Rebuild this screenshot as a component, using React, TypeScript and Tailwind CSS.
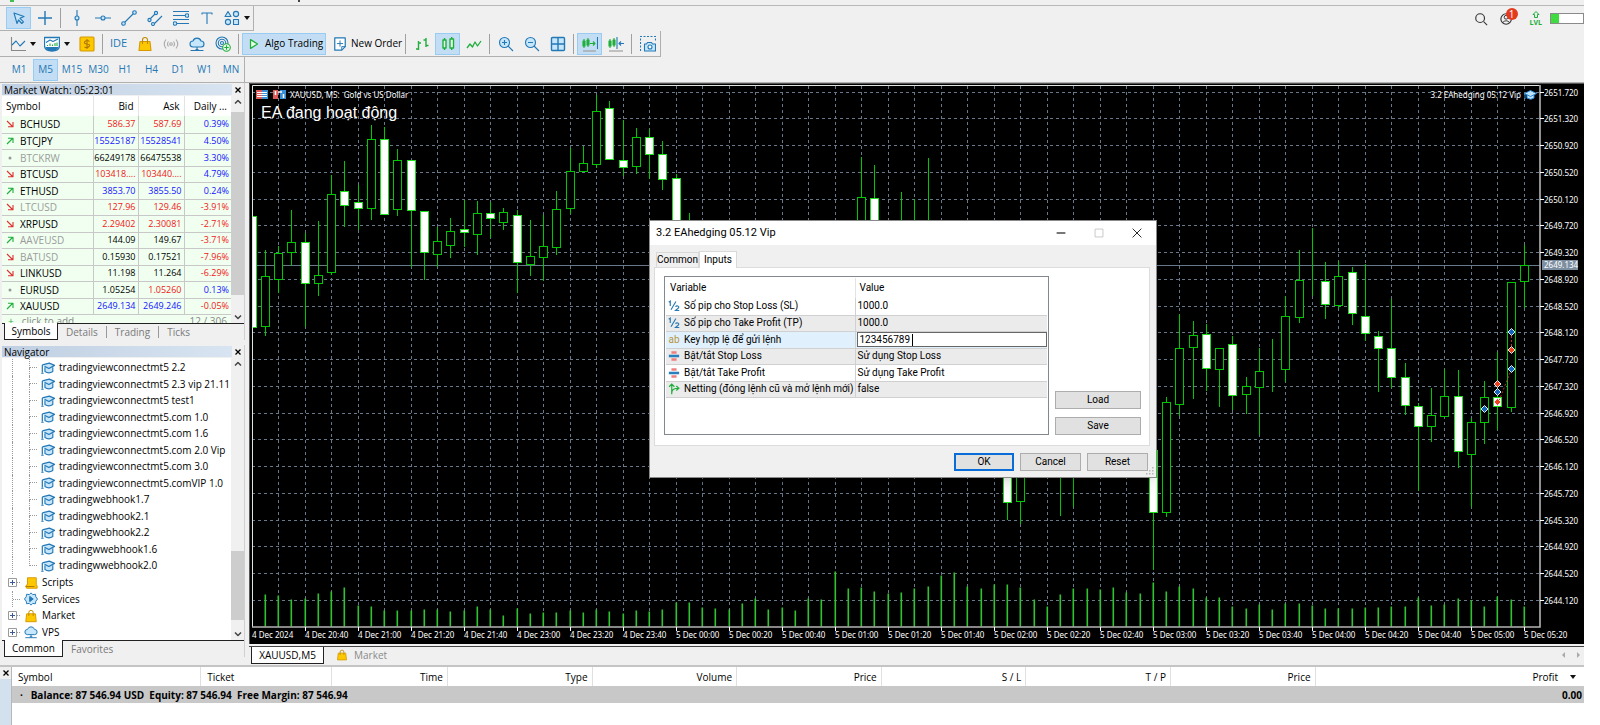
import type { ReactNode } from "react";

/* ---------- chart data ---------- */

type Candle = [slot: number, high: number, top: number, bottom: number, low: number, filled: 0 | 1];

const candles: Candle[] = [
  [0, 216, 216, 327, 327, 1], [1, 250, 276, 326, 335, 0], [2, 246, 253, 279, 292, 0], [3, 210, 242, 252, 265, 0],
  [4, 233, 242, 283, 326, 1], [5, 221, 275, 283, 295, 0], [6, 175, 194, 272, 274, 0], [7, 161, 191, 205, 226, 1],
  [8, 185, 202, 208, 229, 1], [9, 125, 139, 208, 219, 0], [10, 127, 139, 214, 214, 1], [11, 149, 160, 209, 215, 0],
  [12, 160, 160, 210, 266, 1], [13, 211, 211, 252, 279, 1], [14, 227, 241, 254, 266, 0], [15, 218, 231, 245, 257, 0],
  [16, 200, 229, 232, 246, 1], [17, 201, 213, 234, 254, 0], [18, 202, 213, 218, 237, 1], [19, 208, 212, 222, 229, 0],
  [20, 210, 215, 262, 292, 1], [21, 220, 256, 264, 275, 0], [22, 215, 246, 257, 280, 0], [23, 191, 209, 247, 254, 0],
  [24, 148, 171, 208, 213, 0], [25, 146, 163, 171, 171, 0], [26, 95, 111, 164, 167, 0], [27, 101, 108, 159, 159, 1],
  [28, 120, 160, 167, 175, 1], [29, 128, 137, 166, 173, 0], [30, 129, 137, 154, 178, 1], [31, 141, 154, 179, 189, 1],
  [32, 174, 178, 245, 260, 1], [33, 213, 240, 260, 270, 0], [46, 157, 197, 240, 250, 0], [47, 165, 198, 240, 250, 1],
  [49, 192, 240, 260, 270, 0], [50, 199, 240, 260, 270, 0], [51, 158, 240, 260, 270, 0], [57, 440, 450, 502, 519, 1],
  [58, 440, 450, 501, 523, 0], [61, 430, 440, 460, 515, 0], [62, 430, 440, 460, 506, 0], [68, 440, 450, 512, 569, 1],
  [69, 397, 402, 512, 516, 0], [70, 314, 348, 404, 415, 0], [71, 321, 335, 347, 398, 0], [72, 324, 334, 368, 390, 1],
  [73, 348, 348, 369, 406, 0], [74, 336, 344, 395, 409, 1], [75, 377, 386, 394, 413, 0], [76, 348, 371, 387, 434, 0],
  [77, 339, 370, 370, 391, 0], [78, 296, 316, 369, 381, 0], [79, 250, 280, 317, 322, 0], [80, 228, 281, 281, 295, 0],
  [81, 262, 281, 304, 318, 1], [82, 261, 276, 305, 308, 0], [83, 267, 272, 313, 324, 1], [84, 264, 316, 333, 340, 1],
  [85, 331, 336, 348, 391, 1], [86, 299, 348, 377, 387, 1], [87, 363, 377, 405, 414, 1], [88, 403, 406, 426, 490, 1],
  [89, 388, 415, 426, 441, 0], [90, 369, 396, 416, 416, 0], [91, 370, 396, 451, 467, 1], [92, 418, 422, 454, 506, 0],
  [93, 381, 397, 422, 443, 0], [94, 352, 397, 406, 429, 1], [95, 282, 282, 407, 411, 0], [96, 245, 265, 281, 307, 0],
];

const volumes = [
  32, 31, 27, 28, 33, 35, 39, 21, 20, 16, 16, 16, 17, 17, 15, 16, 20, 17, 11, 18, 13, 14, 14, 16, 14, 17, 15, 13, 16,
  15, 17, 24, 24, 19, 18, 17, 23, 28, 17, 19, 16, 28, 27, 55, 38, 39, 35, 33, 34, 38, 40, 51, 54, 40, 38, 42, 42, 39,
  27, 20, 32, 38, 38, 37, 39, 34, 33, 44, 35, 40, 38, 29, 29, 20, 18, 22, 17, 23, 23, 21, 18, 18, 18, 19, 19, 20, 20,
  29, 21, 22, 28, 26, 20, 30, 27, 20,
];

const timeLabels = [
  "4 Dec 20:40", "4 Dec 21:00", "4 Dec 21:20", "4 Dec 21:40", "4 Dec 23:00", "4 Dec 23:20", "4 Dec 23:40",
  "5 Dec 00:00", "5 Dec 00:20", "5 Dec 00:40", "5 Dec 01:00", "5 Dec 01:20", "5 Dec 01:40", "5 Dec 02:00",
  "5 Dec 02:20", "5 Dec 02:40", "5 Dec 03:00", "5 Dec 03:20", "5 Dec 03:40", "5 Dec 04:00", "5 Dec 04:20",
  "5 Dec 04:40", "5 Dec 05:00", "5 Dec 05:20",
];

const slotX = (slot: number) => Math.round(251.6 + slot * 13.253) + 0.5;
const rowY = (row: number) => Math.round(91.5 + row * 26.76) + 0.5;

const trades: [number, number, string][] = [
  [95, 332, "#1565c0"], [95, 350, "#f04020"], [95, 369, "#1565c0"], [94, 384, "#f04020"],
  [94, 392, "#1565c0"], [94, 402, "#f04020"], [93, 409, "#1565c0"],
];

function Chart() {
  return (
    <svg viewBox="249 83 1335 561" className="block w-full bg-black" role="img" aria-label="XAUUSD M5 chart">
      <g stroke="#66788a" strokeDasharray="3 3" fill="none">
        {Array.from({ length: 48 }, (_, k) => (
          <path key={k} d={`M${slotX(2 + 2 * k)} 86V627`} />
        ))}
        {Array.from({ length: 20 }, (_, k) => (
          <path key={k} d={`M252 ${rowY(k)}H1540`} />
        ))}
      </g>
      <path d="M253 265.5H1540" stroke="#66788a" />
      <g fill="#2fc42f">
        {volumes.map((v, i) => (
          <rect key={i} x={slotX(i + 1) - 1} y={626.5 - v} width={1.6} height={v} />
        ))}
      </g>
      <g stroke="#00c800">
        {candles.map(([slot, high, top, bottom, low, filled]) => {
          const x = slotX(slot);
          const left = slot === 0 ? x : x - 4;
          return (
            <g key={slot}>
              <path d={`M${x} ${high}V${low + 1}`} />
              <rect
                x={left}
                y={top + 0.5}
                width={x + 4 - left}
                height={bottom - top}
                fill={filled ? "#fff" : "#000"}
                stroke={filled ? "#1be01b" : "#00c800"}
              />
            </g>
          );
        })}
      </g>
      <path d="M1511.5 332V350M1511.5 369L1498.5 402" stroke="#b03a20" strokeDasharray="2 2" fill="none" />
      {trades.map(([slot, y, color]) => (
        <path
          key={`${slot}-${y}`}
          d={`M${slotX(slot)} ${y - 3.5}l3.5 3.5l-3.5 3.5l-3.5 -3.5z`}
          fill={color}
          stroke="#e8eef5"
        />
      ))}
      <path d="M252.5 627V85.500H1539.500" stroke="#dfe6df" fill="none" />
      <path d="M252 627H1540V85" stroke="#b4b4b4" strokeWidth={1.6} fill="none" />
      <path d="M249.500 644V83.500H1584" stroke="#555" fill="none" />
      <g className="fill-white font-['Noto_Sans',sans-serif] text-[8px]">
        {Array.from({ length: 20 }, (_, k) => (
          <g key={k}>
            <path d={`M1540 ${rowY(k)}h4`} stroke="#fff" />
            <text x={1544} y={rowY(k) + 3}>{(2651.72 - 0.4 * k).toFixed(3)}</text>
          </g>
        ))}
        <rect x={1542} y={260} width={36} height={10} fill="#7c8ea0" />
        <text x={1544} y={268}>2649.134</text>
        <text x={252} y={638}>4 Dec 2024</text>
        {timeLabels.map((t, k) => (
          <g key={t}>
            <path d={`M${slotX(4 + 4 * k)} 627v4`} stroke="#fff" />
            <text x={slotX(4 + 4 * k) - 0.5} y={638}>{t}</text>
          </g>
        ))}
        <text x={290} y={98}>XAUUSD, M5:&nbsp; Gold vs US Dollar</text>
        <text x={1521} y={98} textAnchor="end">3.2 EAhedging 05.12 Vip</text>
      </g>
      <text x={261} y={118} className="fill-white font-['Liberation_Sans',Arial,sans-serif] text-[16px]">
        EA đang hoạt động
      </text>
      <g>
        <path d="M256 90h6v9h-6z" fill="#e05a5a" />
        <path d="M262 90h6v9h-6z" fill="#3b8fd6" />
        <path d="M257 92.500h10M257 94.500h10M257 96.500h10" stroke="#fff" />
        <path d="M273 90h5v9h-5z" fill="#e05a5a" />
        <path d="M280 90h6v9h-6z" fill="#3b8fd6" />
        <path d="M275.500 91v4M278 92h4M283.500 94v4" stroke="#fff" strokeWidth={1.500} />
      </g>
      <path d="M1527 95v3q4 2.500 7 0v-3" fill="#bfe3fb" stroke="#2a8ad4" />
      <path d="M1524.500 93.500l6-3 6 3-6 3zM1525 94v5" fill="#bfe3fb" stroke="#2a8ad4" />
    </svg>
  );
}

/* ---------- icons ---------- */

function Icon({ children, size = "size-4" }: { children: ReactNode; size?: string }) {
  return (
    <svg
      viewBox="0 0 16 16"
      className={`${size} shrink-0`}
      fill="none"
      stroke="#2378b5"
      strokeWidth={1.1}
      strokeLinejoin="round"
      aria-hidden="true"
    >
      {children}
    </svg>
  );
}

const BagIcon = ({ size }: { size?: string }) => (
  <Icon size={size}>
    <path d="M3 5.500h10l1 9H2z" fill="#fdc800" stroke="#d69a00" />
    <path d="M5.500 8V4a2.500 2.500 0 0 1 5 0v4" stroke="#c08a00" />
  </Icon>
);

const CloudIcon = ({ size }: { size?: string }) => (
  <Icon size={size}>
    <path d="M4 11a3 3 0 0 1 0-6 4.200 4.200 0 0 1 8 0 3 3 0 0 1 0 6z" fill="#c5e6fb" />
    <path d="M8 11v3M1.500 14.500h13M6.500 13.500h3" />
  </Icon>
);

const CapIcon = () => (
  <Icon size="size-3.5">
    <path d="M4.500 7v5q4.500 3 9 0V7" fill="#c5e6fb" strokeWidth={1.300} />
    <path d="M1.500 4.500L9.500 2.500l6 2.500-6.500 3.500-5-2.500M1.500 4.500V13M.3 14h2.700" fill="#c5e6fb" strokeWidth={1.400} />
  </Icon>
);

const PlusBox = () => (
  <svg viewBox="0 0 9 9" className="size-[9px] bg-white" aria-hidden="true">
    <path d="M.5 .5h8v8h-8z" fill="#fff" stroke="#9a9a9a" />
    <path d="M2 4.500h5M4.500 2v5" stroke="#3b5a9a" />
  </svg>
);

const Close = ({ label }: { label: string }) => (
  <button aria-label={label} className="flex size-3 items-center justify-center">
    <svg viewBox="0 0 6 6" className="size-1.5" aria-hidden="true">
      <path d="M.5 .5l5 5M5.500 .5l-5 5" stroke="#000" strokeWidth={1.300} />
    </svg>
  </button>
);

const Caret = () => (
  <svg viewBox="0 0 6 4" className="h-1 w-1.5 shrink-0" aria-hidden="true">
    <path d="M0 0h6L3 4z" fill="#111" />
  </svg>
);

/* ---------- toolbars ---------- */

function Tool({ label, active, children, menu }: { label: string; active?: boolean; children: ReactNode; menu?: boolean }) {
  return (
    <button
      aria-label={label}
      className={`flex h-[22px] shrink-0 items-center justify-center gap-1 border ${menu ? "w-[33px]" : "w-[25px]"} ${
        active ? "border-[#99ccf3] bg-[#c3def4]" : "border-transparent"
      }`}
    >
      {children}
      {menu && <Caret />}
    </button>
  );
}

const Sep = () => <span className="mx-0.5 h-5 w-px shrink-0 bg-[#a0a0a0]" />;

function Bar({ children }: { children: ReactNode }) {
  return (
    <div className="flex h-[25px] w-max items-center gap-px border-r border-b border-[#b0b0b0] pl-1.5 even:h-[26px] last:border-b-0">
      {children}
    </div>
  );
}

function DrawingBar() {
  return (
    <Bar>
      <Tool label="Cursor" active>
        <Icon><path d="M2.500 2.500l10 3.500-4 1.800 3.500 3.500-1.700 1.700L7 9.500 5.500 13z" fill="#c5e6fb" transform="translate(.5 .5)" /></Icon>
      </Tool>
      <Tool label="Crosshair"><Icon><path d="M8 1v5M8 10v5M1 8h5M10 8h5M8 6v4M6 8h4" strokeWidth={1.400} /></Icon></Tool>
      <Sep />
      <Tool label="Vertical line"><Icon><path d="M8 0v6M8 10v6" /><circle cx="8" cy="8" r="2" fill="#c5e6fb" /></Icon></Tool>
      <Tool label="Horizontal line"><Icon><path d="M0 8h6M10 8h6" /><circle cx="8" cy="8" r="2" fill="#c5e6fb" /></Icon></Tool>
      <Tool label="Trend line">
        <Icon><path d="M3.500 12.500l9-9" /><circle cx="2.500" cy="13.500" r="1.800" fill="#c5e6fb" /><circle cx="13.500" cy="2.500" r="1.800" fill="#c5e6fb" /></Icon>
      </Tool>
      <Tool label="Channel">
        <Icon><path d="M3 9l5-5M7 14l8-8" /><circle cx="2.500" cy="10" r="1.600" fill="#c5e6fb" /><circle cx="9" cy="3" r="1.600" fill="#c5e6fb" /><circle cx="6" cy="14" r="1.500" fill="#c5e6fb" /></Icon>
      </Tool>
      <Tool label="Fibonacci">
        <Icon><path d="M0 1.500h16M0 5.500h12M0 9.500h16M4 13.500h12" /><circle cx="14" cy="5.500" r="1.800" fill="#c5e6fb" /><circle cx="2" cy="13.500" r="1.800" fill="#c5e6fb" /></Icon>
      </Tool>
      <Tool label="Text"><Icon><path d="M3 4.500V3h10v1.500M8 3v11" /></Icon></Tool>
      <Tool label="Shapes" menu>
        <Icon><path d="M4 1.500l3 5H1zM9.500 9.500h5v5h-5z" fill="#c5e6fb" /><circle cx="12" cy="4" r="2.600" fill="#c5e6fb" /><circle cx="4" cy="12" r="2.600" fill="#c5e6fb" /></Icon>
      </Tool>
    </Bar>
  );
}

function StandardBar() {
  return (
    <Bar>
      <Tool label="Line chart" menu><Icon><path d="M1.500 1v13.500H16" stroke="#888" /><path d="M2 9l4-4 4 5 5-5" /></Icon></Tool>
      <Tool label="Indicators" menu>
        <Icon><path d="M.5 1.500h15v8q0 5.500-7.500 5.500T.5 9.500z" fill="#fff" strokeWidth={1.300} /><path d="M2 11.500h12q-2 3-6 3t-6-3z" fill="#2378b5" /><path d="M2 6.500l4-2.500 3 1.500 5-2.500" /><path d="M3.500 10V9M6 10V7.500M8.500 10V8.500M11 10V7M13 10V6.500" stroke="#1fae3c" /></Icon>
      </Tool>
      <Tool label="Currency">
        <Icon><rect x="1" y="1" width="14" height="14" rx="1" fill="#fdc800" stroke="#d69a00" /><path d="M10.500 5.500Q8 3.500 6 5.500T8 8t2 2.500T5.500 11M8 3v10" stroke="#b07800" /></Icon>
      </Tool>
      <Sep />
      <button className="h-[22px] w-[25px] text-[11px] text-[#2378b5]">IDE</button>
      <Tool label="Market"><BagIcon /></Tool>
      <Tool label="Signals"><Icon><g stroke="#aaa"><circle cx="8" cy="8" r="1.300" /><path d="M5.500 5.500q-2 2.500 0 5M10.500 5.500q2 2.500 0 5M3 3.500q-3.500 4.500 0 9M13 3.500q3.500 4.500 0 9" /></g></Icon></Tool>
      <Tool label="VPS"><CloudIcon /></Tool>
      <Tool label="Community">
        <Icon><circle cx="7" cy="7" r="6" /><circle cx="7" cy="7" r="3.700" /><circle cx="7" cy="7" r="1.500" /><circle cx="11.500" cy="11.500" r="3.800" fill="#e8f8e8" stroke="#1fae3c" /><path d="M11.500 9.300v4.400M9.300 11.500h4.400" stroke="#1fae3c" /></Icon>
      </Tool>
      <Sep />
      <button className="flex h-[22px] w-[84px] shrink-0 items-center gap-1 border border-[#99ccf3] bg-[#c3def4] pl-1 text-[10px] whitespace-nowrap">
        <Icon size="size-3.5"><path d="M4 3v10l8-5z" fill="#e6ffe6" stroke="#1fae3c" strokeWidth={1.400} /></Icon>
        Algo Trading
      </button>
      <button className="flex h-[22px] w-[75px] shrink-0 items-center gap-1 pl-1.5 text-[10px] whitespace-nowrap">
        <Icon size="size-3.5"><path d="M2 1h12v10l-4 4H2z" fill="#fff" strokeWidth={1.400} /><path d="M14 11h-4v4M8 4v7M4.500 7.500h7" /></Icon>
        New Order
      </button>
      <Sep />
      <Tool label="Bars"><Icon><path d="M4.500 5v9M2 13h2.500M4.500 7H7M12 2v9M9.500 4H12M12 9.500h2.500" stroke="#1fae3c" strokeWidth={1.400} /></Icon></Tool>
      <Tool label="Candles" active><Icon><path d="M3 4h3v8H3zM4.500 2v2M4.500 12v2M10 3h3.500v9H10zM11.700 1v2M11.700 12v2" fill="#e6ffe6" stroke="#1fae3c" strokeWidth={1.400} /></Icon></Tool>
      <Tool label="Line"><Icon><path d="M1 12l3-4 2.500 3L9 6l2.500 4L15 5" stroke="#1fae3c" strokeWidth={1.300} /></Icon></Tool>
      <Sep />
      <Tool label="Zoom in"><Icon><circle cx="6.500" cy="6.500" r="5" fill="#c5e6fb" /><path d="M10 10l5 5M6.500 4v5M4 6.500h5" /></Icon></Tool>
      <Tool label="Zoom out"><Icon><circle cx="6.500" cy="6.500" r="5" fill="#c5e6fb" /><path d="M10 10l5 5M4 6.500h5" /></Icon></Tool>
      <Tool label="Tile windows"><Icon><rect x="1.500" y="1.500" width="13" height="13" rx="1" fill="#c5e6fb" strokeWidth={1.400} /><path d="M8 2v12M2 8h12" strokeWidth={1.400} /></Icon></Tool>
      <Sep />
      <Tool label="Auto scroll" active>
        <Icon><path d="M1 5h2v5H1zM2 3v9M5 4h2v5H5zM6 2v9M8 7.500h5M11 5.500l2 2-2 2" stroke="#1fae3c" /><path d="M15.500 1v12" /><path d="M1 15h13" stroke="#999" /></Icon>
      </Tool>
      <Tool label="Chart shift">
        <Icon><path d="M1 5h2v5H1zM2 3v9M5 4h2v5H5zM6 2v9" stroke="#1fae3c" /><path d="M9 1v12M16 7.500h-5M13 5.500l-2 2 2 2" /><path d="M1 15h14" stroke="#999" /></Icon>
      </Tool>
      <Sep />
      <Tool label="Screenshot">
        <Icon><path d="M.5 15V.5h15V5" strokeDasharray="2 1.500" /><path d="M4.500 8h2l1-1.500h4l1 1.500h3v7h-11z" fill="#c5e6fb" /><circle cx="10" cy="11" r="2" fill="#fff" /></Icon>
      </Tool>
    </Bar>
  );
}

function PeriodBar() {
  return (
    <Bar>
      {["M1", "M5", "M15", "M30", "H1", "H4", "D1", "W1", "MN"].map((p, i) => (
        <button
          key={p}
          className={`h-[22px] border text-[10px] text-[#2378b5] ${i % 2 ? "w-[25px]" : "w-[26px]"} ${
            p === "M5" ? "border-[#99ccf3] bg-[#c3def4]" : "border-transparent"
          }`}
        >
          {p}
        </button>
      ))}
    </Bar>
  );
}

/* ---------- side panels ---------- */

function PanelTitle({ children }: { children: string }) {
  return (
    <div className="flex h-[13px] items-center justify-between bg-[#f0f0f0]">
      <h2 className="flex h-[11px] flex-1 items-center bg-linear-to-r from-[#bfcfe2] to-[#d8e4f1] pl-0.5 text-[10px] leading-3">{children}</h2>
      <Close label={`Close ${children}`} />
    </div>
  );
}

function Scrollbar({ thumb }: { thumb: string }) {
  return (
    <div className="flex w-[13px] shrink-0 flex-col items-center bg-[#f0f0f0]">
      <Icon size="size-3"><path d="M4 10l4-4 4 4" stroke="#444" strokeWidth={2} /></Icon>
      <div className="flex w-full flex-1 flex-col"><div className={`w-full bg-[#cdcdcd] ${thumb}`} /></div>
      <Icon size="size-3"><path d="M4 6l4 4 4-4" stroke="#444" strokeWidth={2} /></Icon>
    </div>
  );
}

type Tone = "r" | "b" | "k";
const tones: Record<Tone, string> = { r: "text-[#f01818]", b: "text-[#1414ff]", k: "text-black" };

const quotes: [string, "up" | "down" | "flat", boolean, string, Tone, string, Tone, string, Tone][] = [
  ["BCHUSD", "down", false, "586.37", "r", "587.69", "r", "0.39%", "b"],
  ["BTCJPY", "up", false, "15525187", "b", "15528541", "b", "4.50%", "b"],
  ["BTCKRW", "flat", true, "66249178", "k", "66475538", "k", "3.30%", "b"],
  ["BTCUSD", "down", false, "103418....", "r", "103440....", "r", "4.79%", "b"],
  ["ETHUSD", "up", false, "3853.70", "b", "3855.50", "b", "0.24%", "b"],
  ["LTCUSD", "down", true, "127.96", "r", "129.46", "r", "-3.91%", "r"],
  ["XRPUSD", "down", false, "2.29402", "r", "2.30081", "r", "-2.71%", "r"],
  ["AAVEUSD", "up", true, "144.09", "k", "149.67", "k", "-3.71%", "r"],
  ["BATUSD", "down", true, "0.15930", "k", "0.17521", "k", "-7.96%", "r"],
  ["LINKUSD", "down", false, "11.198", "k", "11.264", "k", "-6.29%", "r"],
  ["EURUSD", "flat", false, "1.05254", "k", "1.05260", "r", "0.13%", "b"],
  ["XAUUSD", "up", false, "2649.134", "b", "2649.246", "b", "-0.05%", "r"],
];

function Trend({ dir }: { dir: "up" | "down" | "flat" }) {
  if (dir === "flat") return <Icon size="size-2"><circle cx="8" cy="8" r="3" fill="#999" stroke="none" /></Icon>;
  return (
    <Icon size="size-2">
      {dir === "up" ? (
        <path d="M2 14L13 3M4 2.500h10V12" stroke="#1fae3c" strokeWidth={2.200} />
      ) : (
        <path d="M2 2l11 11M4 13.500h10V4" stroke="#e03030" strokeWidth={2.200} />
      )}
    </Icon>
  );
}

function MarketWatch() {
  return (
    <section className="mr-1 ml-0.5 border-r border-[#d0d0d0]">
      <PanelTitle>Market Watch: 05:23:01</PanelTitle>
      <div className="flex h-[227px] overflow-hidden bg-white">
        <div className="flex-1 overflow-hidden">
          <table className="w-full table-fixed border-collapse text-[10px] leading-3">
            <thead>
              <tr className="h-[20px]">
                <th className="w-[91px] border-r border-[#e4e4e4] pl-1 text-left font-normal">Symbol</th>
                <th className="w-[45px] border-r border-[#e4e4e4] pr-1 text-right font-normal">Bid</th>
                <th className="w-[46px] border-r border-[#e4e4e4] pr-1 text-right font-normal">Ask</th>
                <th className="pr-1 text-right font-normal whitespace-nowrap">Daily ...</th>
              </tr>
            </thead>
            <tbody>
              {quotes.map(([name, dir, dim, bid, bt, ask, at, day, dt]) => (
                <tr key={name} className="border-b border-[#c8c8c8] bg-[#f0fff0] odd:h-[17px] even:h-[16px]">
                  <td className="border-r border-[#c8c8c8] p-0">
                    <span className={`flex items-center gap-1.5 pl-1 ${dim ? "text-[#9c9c9c]" : ""}`}><Trend dir={dir} />{name}</span>
                  </td>
                  <td className={`border-r border-[#c8c8c8] p-0 pr-0.5 text-right text-[9px] ${tones[bt]}`}>{bid}</td>
                  <td className={`border-r border-[#c8c8c8] p-0 pr-0.5 text-right text-[9px] ${tones[at]}`}>{ask}</td>
                  <td className={`p-0 pr-0.5 text-right text-[9px] ${tones[dt]}`}>{day}</td>
                </tr>
              ))}
            </tbody>
          </table>
          <div className="flex justify-between bg-[#f0fff0] pr-1 pl-1.5 text-[10px] leading-3 text-[#888]">
            <span className="flex gap-2"><span className="text-[#1fae3c]">+</span>click to add</span>
            <span>12 / 306</span>
          </div>
        </div>
        <Scrollbar thumb="mt-1 h-[183px]" />
      </div>
      <Tabs names={["Symbols", "Details", "Trading", "Ticks"]} width="w-[54px]" />
    </section>
  );
}

function Tabs({ names, width }: { names: string[]; width: string }) {
  return (
    <div className="flex h-[17px] border-t border-[#222] text-[10px]" role="tablist">
      {names.map((n, i) =>
        i === 0 ? (
          <button key={n} role="tab" aria-selected className={`-mt-px ml-0.5 h-[17px] ${width} border border-t-0 border-[#222] bg-white leading-4`}>{n}</button>
        ) : (
          <button key={n} role="tab" aria-selected={false} className="my-0.5 border-r border-[#999] px-2 leading-3 text-[#7a7a7a] last:border-r-0">{n}</button>
        ),
      )}
    </div>
  );
}

const experts = [
  "tradingviewconnectmt5 2.2", "tradingviewconnectmt5 2.3 vip 21.11", "tradingviewconnectmt5 test1",
  "tradingviewconnectmt5.com 1.0", "tradingviewconnectmt5.com 1.6", "tradingviewconnectmt5.com 2.0 Vip",
  "tradingviewconnectmt5.com 3.0", "tradingviewconnectmt5.comVIP 1.0", "tradingwebhook1.7", "tradingwebhook2.1",
  "tradingwebhook2.2", "tradingwwebhook1.6", "tradingwwebhook2.0",
];

const folders: [string, boolean, ReactNode][] = [
  ["Scripts", true, <Icon size="size-3.5"><path d="M4 2h10v9h1v3H3q-2-2 0-4h1z" fill="#fdc800" stroke="#d69a00" /><path d="M2 12h10" stroke="#b07800" /></Icon>],
  ["Services", false, <Icon size="size-3.5"><path d="M8 1l2 2 3-.5.5 3L15.500 8l-2 2.500-.5 3-3-.5-2 2-2-2-3 .5-.5-3L.5 8l2-2.500.5-3 3 .5z" fill="#c5e6fb" /><path d="M6.500 5v6l4-3z" fill="#2378b5" /></Icon>],
  ["Market", true, <BagIcon size="size-3.5" />],
  ["VPS", true, <CloudIcon size="size-3.5" />],
];

function Navigator() {
  return (
    <section className="mt-[5px] mr-1 ml-0.5 border-r border-[#d0d0d0]">
      <PanelTitle>Navigator</PanelTitle>
      <div className="flex h-[282px] overflow-hidden bg-white">
        <ul className="flex-1 overflow-hidden pt-px text-[10px]">
          {experts.map((name, i) => (
            <li key={name} className="flex items-center gap-1 whitespace-nowrap odd:h-[17px] even:h-[16px]">
              <span className="ml-2.5 h-full shrink-0 border-l border-dotted border-[#999]" />
              <span className="ml-3 flex h-full w-2 shrink-0 flex-col">
                <span className="h-1/2 border-b border-l border-dotted border-[#999]" />
                {i < experts.length - 1 && <span className="h-1/2 border-l border-dotted border-[#999]" />}
              </span>
              <CapIcon />
              {name}
            </li>
          ))}
          {folders.map(([name, expandable, icon]) => (
            <li key={name} className="flex items-center gap-1 odd:h-[16px] even:h-[17px]">
              <span className="ml-1.5 flex w-3 items-center">
                {expandable ? <PlusBox /> : <span className="ml-1 h-4 border-l border-dotted border-[#999]" />}
                <span className="flex-1 border-b border-dotted border-[#999]" />
              </span>
              {icon}
              {name}
            </li>
          ))}
        </ul>
        <Scrollbar thumb="mt-[181px] h-[69px]" />
      </div>
      <Tabs names={["Common", "Favorites"]} width="w-[59px]" />
    </section>
  );
}

/* ---------- dialog ---------- */

const NumIcon = () => (
  <svg viewBox="0 0 16 16" className="size-3 shrink-0" aria-hidden="true" fill="none" stroke="#2378b5" strokeWidth={1.500}>
    <path d="M1 3l2-1.500V8M4 13L10.500 2M10 9q1-1.500 3-1t1 2.500L10 14h5" />
  </svg>
);
const TextIcon = () => <span className="w-3 text-center text-[10px] text-[#b8963c]">ab</span>;
const EnumIcon = () => (
  <svg viewBox="0 0 14 14" className="size-3 shrink-0" aria-hidden="true">
    <path d="M4 1.500h6v3H4zM4 9.500h6v3H4z" fill="#ee8080" />
    <path d="M1 5.500h12v3H1z" fill="#2a7fbe" />
  </svg>
);
const BoolIcon = () => (
  <svg viewBox="0 0 16 16" className="size-3 shrink-0" aria-hidden="true" fill="none" stroke="#1fae3c" strokeWidth={1.600}>
    <path d="M5 15V2M1.500 5L5 1.500 8.500 5M5 13q0-6 9-6M11 4l3.500 3L11 10" />
  </svg>
);

const inputs: [ReactNode, string, string][] = [
  [<NumIcon />, "Số pip cho Stop Loss (SL)", "1000.0"],
  [<NumIcon />, "Số pip cho Take Profit (TP)", "1000.0"],
  [<TextIcon />, "Key hợp lệ để gửi lệnh", "123456789"],
  [<EnumIcon />, "Bật/tắt Stop Loss", "Sử dụng Stop Loss"],
  [<EnumIcon />, "Bật/tắt Take Profit", "Sử dụng Take Profit"],
  [<BoolIcon />, "Netting (đóng lệnh cũ và mở lệnh mới)", "false"],
];

function PushButton({ children, className, primary }: { children: string; className: string; primary?: boolean }) {
  return (
    <button className={`h-[18px] bg-[#e1e1e1] text-[10px] leading-3 ${className} ${primary ? "border-2 border-[#0a6cd6]" : "border border-[#adadad]"}`}>
      {children}
    </button>
  );
}

function Dialog() {
  return (
    <div
      role="dialog"
      aria-label="3.2 EAhedging 05.12 Vip"
      className="absolute top-[137px] left-[400px] w-[508px] border border-[#8a8a8a] bg-[#f0f0f0] font-[Roboto,'Noto_Sans',sans-serif] text-[10px] shadow-lg"
    >
      <header className="flex h-6 items-center bg-white pr-3 pl-1.5">
        <h2 className="flex-1 text-[11px]">3.2 EAhedging 05.12 Vip</h2>
        <div className="flex items-center gap-6">
          <button aria-label="Minimize"><Icon size="size-3.5"><path d="M3 8h10" stroke="#222" strokeWidth={1.400} /></Icon></button>
          <button aria-label="Maximize" disabled><Icon size="size-3.5"><path d="M3.500 3.500h9v9h-9z" stroke="#c8c8c8" /></Icon></button>
          <button aria-label="Close"><Icon size="size-3.5"><path d="M3 3l10 10M13 3L3 13" stroke="#222" /></Icon></button>
        </div>
      </header>
      <div className="mt-1.5 flex items-end pl-1.5" role="tablist">
        <button role="tab" aria-selected={false} className="h-[15px] w-[43px] border border-b-0 border-[#d9d9d9] leading-[14px]">Common</button>
        <button role="tab" aria-selected className="-mb-px h-[17px] w-[38px] border border-b-0 border-[#d9d9d9] bg-white leading-[14px]">Inputs</button>
      </div>
      <div className="mr-1.5 ml-1 flex h-[179px] gap-1.5 border border-[#dcdcdc] bg-white pt-2 pr-2 pb-2.5 pl-[9px]">
        <div className="flex-1 border border-[#828790] p-px">
          <table className="w-full table-fixed border-collapse leading-3">
            <thead>
              <tr className="h-[20px]">
                <th className="w-[189px] border-r border-[#e4e4e4] pl-1 text-left font-normal">Variable</th>
                <th className="pl-1 text-left font-normal">Value</th>
              </tr>
            </thead>
            <tbody>
              {inputs.map(([icon, name, value], i) => (
                <tr key={name} className={`border-b border-[#d0d0d0] odd:h-[17px] even:h-[16px] ${i === 2 ? "bg-[#e0f0fd]" : i % 2 ? "bg-[#ebebeb]" : ""}`}>
                  <td className="border-r border-[#d0d0d0] p-0">
                    <label htmlFor={i === 2 ? "key" : undefined} className="flex items-center gap-1 pl-0.5 whitespace-nowrap">{icon}{name}</label>
                  </td>
                  <td className={i === 2 ? "p-0 pl-px" : "p-0 pl-0.5"}>
                    {i === 2 ? (
                      <span className="flex h-[15px] items-center border border-[#666] bg-white pl-0.5">
                        <input id="key" defaultValue={value} size={9} className="h-3 w-[53px] border-r border-black bg-white p-0 leading-3 outline-none" />
                      </span>
                    ) : value}
                  </td>
                </tr>
              ))}
            </tbody>
          </table>
        </div>
        <div className="flex w-[86px] flex-col justify-end gap-2">
          <PushButton className="w-full">Load</PushButton>
          <PushButton className="w-full">Save</PushButton>
        </div>
      </div>
      <footer className="flex h-[31px] items-center justify-end gap-1.5 pr-2">
        <PushButton className="w-[60px]" primary>OK</PushButton>
        <PushButton className="w-[61px]">Cancel</PushButton>
        <PushButton className="w-[61px]">Reset</PushButton>
      </footer>
      <svg viewBox="0 0 8 8" className="absolute right-0.5 bottom-0.5 size-2" aria-hidden="true">
        <path d="M6 0h1.500v1.500H6zM3 3h1.500v1.500H3zM6 3h1.500v1.500H6zM0 6h1.500v1.500H0zM3 6h1.500v1.500H3zM6 6h1.500v1.500H6z" fill="#b5b5b5" />
      </svg>
    </div>
  );
}

/* ---------- trade table ---------- */

const columns: [string, string][] = [
  ["Symbol", "w-[12%] text-left"], ["Ticket", "w-[8.3%] text-left"], ["Time", "w-[7.4%] text-right"],
  ["Type", "w-[9.2%] text-right"], ["Volume", "w-[9.2%] text-right"], ["Price", "w-[9.2%] text-right"],
  ["S / L", "w-[9.2%] text-right"], ["T / P", "w-[9.2%] text-right"], ["Price ", "w-[9.2%] text-right"],
];

function TradeTable() {
  return (
    <section className="flex min-h-[60px] flex-1 border-t-2 border-[#c4c4c4] bg-white text-[10px]">
      <div className="flex w-3 shrink-0 flex-col border-r border-[#b8b8b8] bg-[#f0f0f0]">
        <Close label="Close toolbox" />
        <div className="flex-1 bg-[#d3e0ee]" />
      </div>
      <div className="flex-1">
        <table className="w-full table-fixed border-collapse leading-3">
          <thead>
            <tr className="h-[19px]">
              {columns.map(([name, cls]) => (
                <th key={name} className={`border-r border-[#e0e0e0] pr-1 pl-1.5 font-normal ${cls}`}>{name}</th>
              ))}
              <th className="pr-2 font-normal"><span className="flex items-center justify-end gap-3">Profit <Caret /></span></th>
            </tr>
          </thead>
          <tbody>
            <tr className="h-[17px] bg-[#c8c8c8] font-bold">
              <td colSpan={9} className="p-0 pl-2 whitespace-pre">·   Balance: 87 546.94 USD  Equity: 87 546.94  Free Margin: 87 546.94</td>
              <td className="p-0 pr-0.5 text-right">0.00</td>
            </tr>
          </tbody>
        </table>
      </div>
    </section>
  );
}

/* ---------- page ---------- */

export default function App() {
  return (
    <div className="min-h-screen bg-white pr-4 font-['Open_Sans','Noto_Sans',sans-serif] text-black">
      <div className="flex min-h-screen flex-col bg-[#f0f0f0]">
        <div className="flex h-[6px] items-start border-b border-[#b8b8b8] pl-2.5">
          <span className="h-0.5 w-1 bg-[#3fbf4f]" />
          <span className="ml-[284px] size-0.5 bg-[#444]" />
        </div>
        <div className="flex items-start justify-between">
          <div>
            <DrawingBar />
            <StandardBar />
            <PeriodBar />
          </div>
          <div className="flex h-[25px] items-center">
            <button aria-label="Search" className="mr-3"><Icon size="size-3.5"><circle cx="7" cy="7" r="5" stroke="#333" strokeWidth={1.300} /><path d="M11 11l4 4" stroke="#333" strokeWidth={1.300} /></Icon></button>
            <button aria-label="Account" className="relative mr-4">
              <Icon size="size-3.5"><circle cx="7" cy="8" r="6" stroke="#333" strokeWidth={1.300} /><circle cx="7" cy="6" r="2.200" stroke="#333" /><path d="M3 12q4-4 8 0" stroke="#333" /></Icon>
              <span className="absolute -top-1 left-1.5 flex size-3 items-center justify-center rounded-full bg-[#e23b20] text-[10px] leading-3 text-white">1</span>
            </button>
            <span className="mr-2 flex flex-col items-center text-[7px] leading-[7px] font-bold text-[#1fae3c]">
              <Icon size="size-2"><path d="M8 1l6 6h-3v6H5V7H2z" stroke="#1fae3c" strokeWidth={2} /></Icon>
              LVL
            </span>
            <span className="flex h-[11px] w-[34px] border border-[#8a8a8a] bg-white"><span className="w-2 bg-[#3fdc3f]" /></span>
          </div>
        </div>
        <div className="flex border-t border-[#b0b0b0]">
          <aside className="flex w-[249px] shrink-0 flex-col">
            <MarketWatch />
            <Navigator />
          </aside>
          <main className="relative min-w-0 flex-1 pb-0.5">
            <Chart />
            <Dialog />
            <div className="mt-0.5 flex h-[17px] items-center border-t border-[#444] text-[10px]" role="tablist">
              <button role="tab" aria-selected className="ml-0.5 h-[17px] w-[73px] border border-t-0 border-[#222] bg-white leading-3">XAUUSD,M5</button>
              <button role="tab" aria-selected={false} className="ml-3 flex items-center gap-1.5 text-[#8a8a8a]"><BagIcon size="size-3" />Market</button>
              <span className="mr-1 ml-auto flex gap-3">
                <button aria-label="Scroll tabs left"><svg viewBox="0 0 3 6" className="h-1.5 w-[3px]"><path d="M3 0v6L0 3z" fill="#aaa" /></svg></button>
                <button aria-label="Scroll tabs right"><svg viewBox="0 0 3 6" className="h-1.5 w-[3px]"><path d="M0 0v6l3-3z" fill="#aaa" /></svg></button>
              </span>
            </div>
          </main>
        </div>
        <TradeTable />
      </div>
    </div>
  );
}
